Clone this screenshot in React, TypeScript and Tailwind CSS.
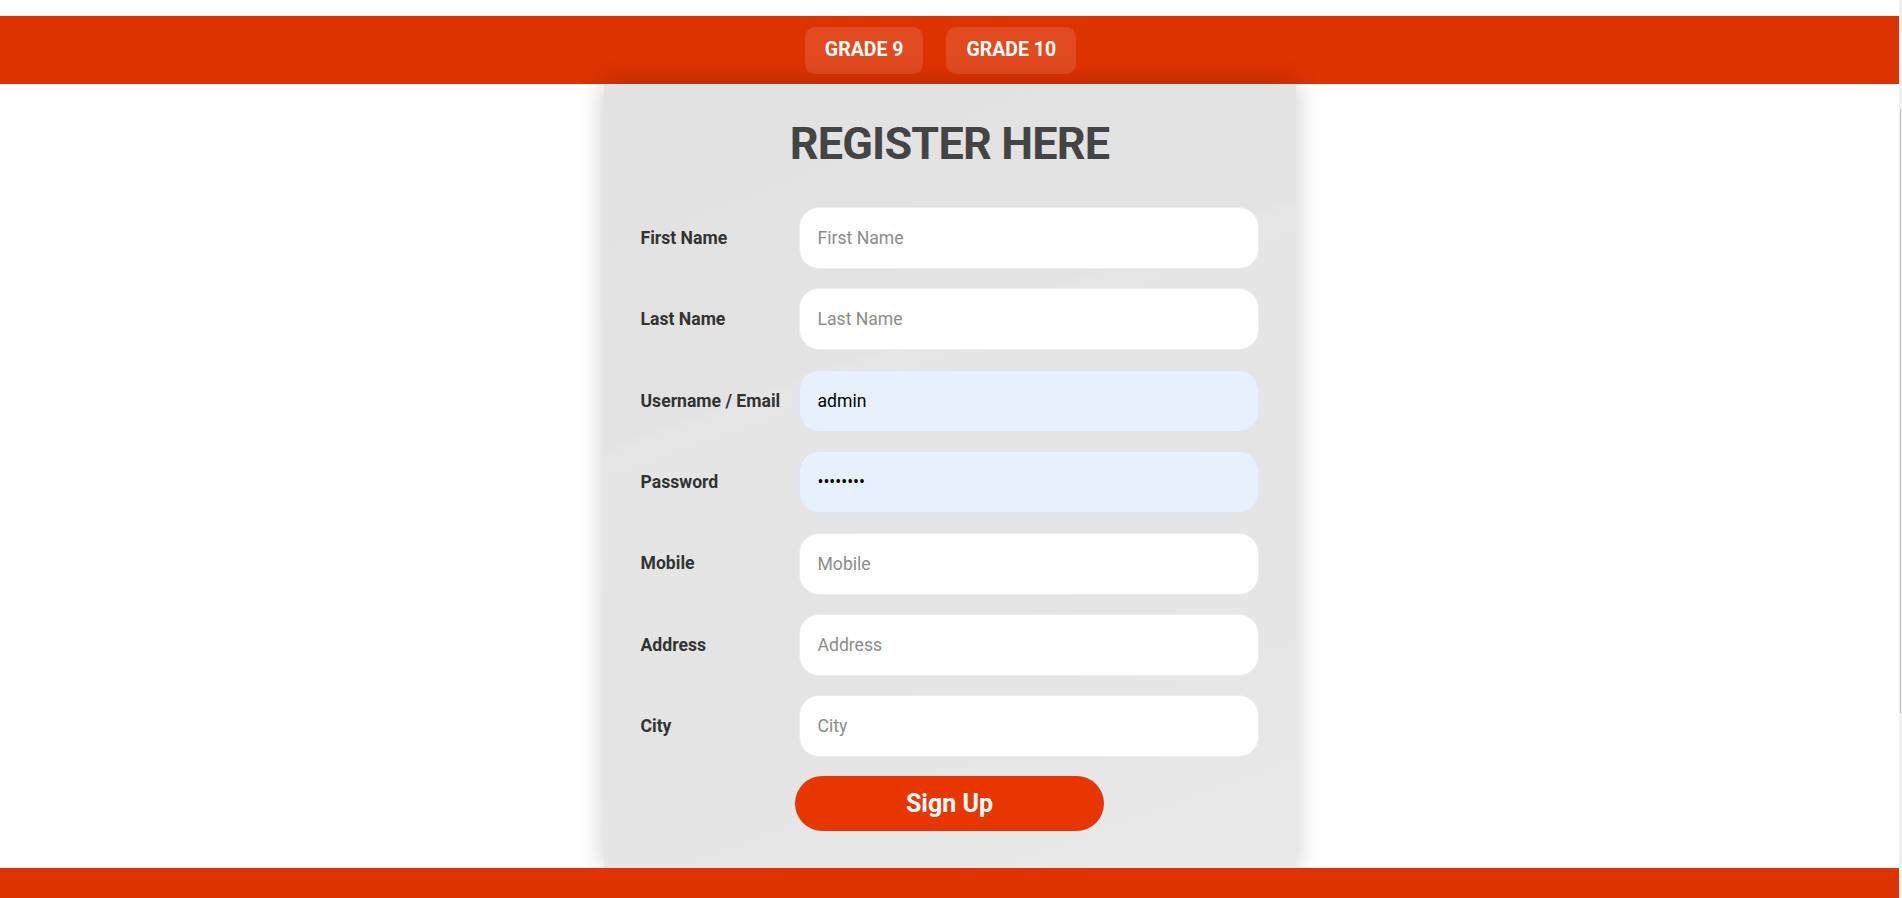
import { useState } from "react";

const fields = [
  { label: "First Name", name: "firstName", value: "", type: "text" },
  { label: "Last Name", name: "lastName", value: "", type: "text" },
  { label: "Username / Email", name: "username", value: "admin", type: "text" },
  { label: "Password", name: "password", value: "password", type: "password" },
  { label: "Mobile", name: "mobile", value: "", type: "text" },
  { label: "Address", name: "address", value: "", type: "text" },
  { label: "City", name: "city", value: "", type: "text" },
];

function Field({
  label,
  name,
  type,
  initial,
}: {
  label: string;
  name: string;
  type: string;
  initial: string;
}) {
  const [value, setValue] = useState(initial);
  const filled = initial !== "";

  return (
    <div className="flex items-center">
      <label
        htmlFor={name}
        className="w-[158px] shrink-0 text-[17.6px] font-bold text-[#333]"
      >
        {label}
      </label>
      <input
        id={name}
        type={type}
        value={value}
        placeholder={label}
        onChange={(e) => setValue(e.target.value)}
        className={
          "h-[62px] w-[460px] rounded-[20px] border px-[18px] text-[17.6px] text-black outline-none placeholder:text-[#8c8c8c] " +
          (filled
            ? "border-[#dde6f5] bg-[#e8f0fe]"
            : "border-[#ececec] bg-white")
        }
      />
    </div>
  );
}

export default function App() {
  return (
    <div
      className="flex h-[898px] overflow-hidden bg-white"
      style={{ fontFamily: "Roboto, 'Noto Sans', sans-serif" }}
    >
      <div className="flex min-w-0 flex-1 flex-col pt-4">
        <header className="flex h-[68px] shrink-0 items-center justify-center bg-[#dd3300]">
          <button className="mr-[23px] h-[47px] rounded-[10px] bg-[#e14a1e] px-[20px] text-[19.5px] font-bold text-white">
            GRADE 9
          </button>
          <button className="mr-[18px] h-[47px] rounded-[10px] bg-[#e14a1e] px-[20px] text-[19.5px] font-bold text-white">
            GRADE 10
          </button>
        </header>

        <main className="relative z-10 flex min-h-0 flex-1 justify-center">
          <form
            className="w-[692px] bg-[linear-gradient(160deg,#e2e2e2_0%,#e3e3e3_35%,#e6e6e6_36%,#e4e4e4_60%,#e8e8e8_100%)] px-[37px] pt-[31px] shadow-[0_0_24px_rgba(0,0,0,0.22)]"
            onSubmit={(e) => e.preventDefault()}
          >
            <h1 className="mb-[34px] text-center text-[45px] font-bold leading-[58px] tracking-[-0.8px] text-[#444]">
              REGISTER HERE
            </h1>
            <div className="flex flex-col gap-[19.4px]">
              {fields.map((f) => (
                <Field
                  key={f.name}
                  label={f.label}
                  name={f.name}
                  type={f.type}
                  initial={f.value}
                />
              ))}
            </div>
            <div className="mt-[19px] flex justify-center">
              <button
                type="submit"
                className="h-[55px] w-[309px] rounded-full bg-[#e83600] text-[25px] font-bold text-white"
              >
                Sign Up
              </button>
            </div>
          </form>
        </main>

        <footer className="relative z-20 h-[30px] shrink-0 bg-[#dd3300]" />
      </div>

      {/* thin scrollbar strip on the right edge */}
      <div className="flex w-[3px] shrink-0 justify-center bg-[#f1f1f1] pt-[109px]">
        <div className="h-[604px] w-px bg-[#c1c1c1]" />
      </div>
    </div>
  );
}
